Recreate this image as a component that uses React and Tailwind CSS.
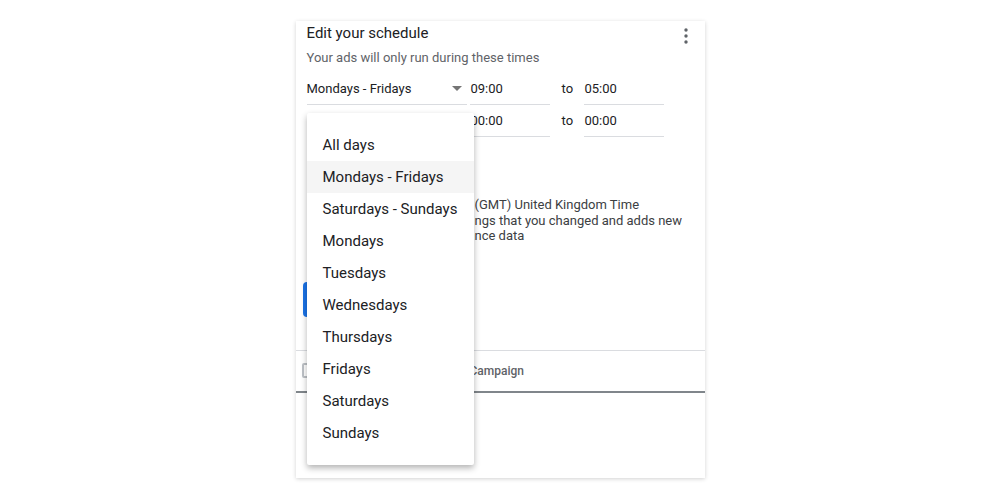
const days = [
  "All days",
  "Mondays - Fridays",
  "Saturdays - Sundays",
  "Mondays",
  "Tuesdays",
  "Wednesdays",
  "Thursdays",
  "Fridays",
  "Saturdays",
  "Sundays",
];

const notes = [
  ["Time zone: ", "(GMT) United Kingdom Time"],
  ["This only changes setti", "ngs that you changed and adds new"],
  ["performa", "nce data"],
];

function TimeField({ value }) {
  return (
    <div className="w-[80px] h-[32px] flex items-center pl-[1px] border-b border-[#dadce0] text-[13px] text-[#202124]">
      {value}
    </div>
  );
}

function ScheduleRow({ day, from, to }) {
  return (
    <div className="flex items-center h-[32px]">
      <div className="w-[160px] h-[32px] flex items-center justify-between pr-[5px] border-b border-[#dadce0] text-[13px] text-[#202124]">
        <span>{day}</span>
        {day && (
          <svg width="10" height="5" viewBox="0 0 10 5">
            <path d="M0 0 L10 0 L5 5 Z" fill="#757575" />
          </svg>
        )}
      </div>
      <div className="ml-[3px]">
        <TimeField value={from} />
      </div>
      <span className="ml-[12px] w-[22px] text-[13px] text-[#202124]">to</span>
      <TimeField value={to} />
    </div>
  );
}

export default function App() {
  return (
    <div className="w-[1000px] h-[500px] bg-white" style={{ fontFamily: "Roboto, 'Liberation Sans', sans-serif" }}>
      <div className="relative mx-auto mt-[21px] w-[409px] h-[457px] bg-white shadow-[0_1px_4px_rgba(0,0,0,0.18)]">
        <div className="px-[11px] pt-[1px]">
          <div className="flex items-start justify-between">
            <h2 className="text-[15px] leading-[22px] text-[#202124]">Edit your schedule</h2>
            <svg width="4" height="16" viewBox="0 0 4 16" className="mt-[6px] mr-[6px]">
              <circle cx="2" cy="2" r="1.7" fill="#5f6368" />
              <circle cx="2" cy="8" r="1.7" fill="#5f6368" />
              <circle cx="2" cy="14" r="1.7" fill="#5f6368" />
            </svg>
          </div>
          <p className="mt-[5px] text-[13px] leading-[18px] text-[#5f6368]">Your ads will only run during these times</p>
          <div className="mt-[6px]">
            <ScheduleRow day="Mondays - Fridays" from="09:00" to="05:00" />
            <ScheduleRow day="" from="00:00" to="00:00" />
          </div>
          <div className="mt-[60px] text-[13px] leading-[15.5px] text-[#3c4043]">
            {notes.map(([hidden, shown]) => (
              <div key={shown} className="flex whitespace-nowrap">
                <span className="w-[168px] flex justify-end overflow-hidden">{hidden}</span>
                <span>{shown}</span>
              </div>
            ))}
          </div>
          <button className="block mt-[38px] -ml-[4px] h-[35px] w-[90px] rounded-[4px] bg-[#1a73e8] text-white text-[13px]">Save</button>
        </div>
        <div className="mt-[33px] border-t border-[#dadce0]">
          <div className="flex items-center h-[40px] pl-[6px]">
            <span className="w-[14px] h-[15px] rounded-[2px] border-2 border-[#bdc1c6]" />
            <span className="ml-[154px] text-[12px] font-medium text-[#5f6368]">Campaign</span>
          </div>
          <div className="h-[2px] bg-[#80868b]" />
        </div>

        <ul className="absolute left-[11px] top-[92px] w-[167px] py-[16px] bg-white rounded-[2px] shadow-[0_3px_6px_rgba(0,0,0,0.3)]">
          {days.map((d) => (
            <li
              key={d}
              className={
                "h-[32px] flex items-center px-[16px] text-[15px] text-[#202124] " +
                (d === "Mondays - Fridays" ? "bg-[#f5f5f5]" : "")
              }
            >
              {d}
            </li>
          ))}
        </ul>
      </div>
    </div>
  );
}
